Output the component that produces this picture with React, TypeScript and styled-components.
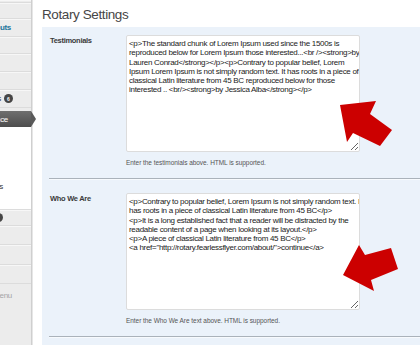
import React from 'react';
import styled, { createGlobalStyle } from 'styled-components';

const GlobalStyle = createGlobalStyle`
  html, body {
    margin: 0;
    padding: 0;
    background: #fff;
    overflow: hidden;
  }
  body {
    font-family: "Liberation Sans", Arial, sans-serif;
  }
`;

const Page = styled.div`
  display: flex;
  width: 420px;
  height: 345px;
  overflow: hidden;
`;

const Rail = styled.div`
  position: relative;
  display: flex;
  flex-direction: column;
  width: 36px;
  min-width: 36px;
`;

const Sidebar = styled.nav`
  display: flex;
  flex-direction: column;
  width: 31px;
  min-width: 31px;
  flex: 1;
  overflow: hidden;
  background: #ececec;
  border-right: 1px solid #cfcfcf;
  box-shadow: 1px 0 0 #e6e6e6;
`;

const MenuItem = styled.div<{ $h: number; $tone?: 'link' | 'muted'; $last?: boolean }>`
  display: flex;
  justify-content: flex-end;
  align-items: center;
  flex: 0 0 ${(p) => p.$h}px;
  overflow: hidden;
  white-space: nowrap;
  border-bottom: ${(p) => (p.$last ? '0' : '1px solid #dcdcdc')};
  box-shadow: ${(p) => (p.$last ? 'none' : 'inset 0 1px 0 #f7f7f7')};
  font-size: 8px;
  letter-spacing: -0.3px;
  color: ${(p) => (p.$tone === 'link' ? '#21759b' : p.$tone === 'muted' ? '#a5a5a5' : '#333')};
  font-weight: ${(p) => (p.$tone === 'link' ? 'bold' : 'normal')};
`;

const MenuText = styled.span<{ $end?: number }>`
  flex: 0 0 auto;
  margin-right: ${(p) => p.$end ?? 0}px;
`;

const ActiveItem = styled(MenuItem)`
  margin-top: 3px;
  border-bottom: 0;
  box-shadow: none;
  background: linear-gradient(#6f6f6f, #4d4d4d);
  color: #fff;
`;

const ActiveTip = styled.span`
  position: absolute;
  left: 31px;
  top: 111px;
  width: 0;
  height: 0;
  border-style: solid;
  border-width: 8px 0 8px 5px;
  border-color: transparent transparent transparent #5a5a5a;
`;

const Submenu = styled.div`
  display: flex;
  flex-direction: column;
  flex: 0 0 78px;
  padding-top: 7px;
  box-sizing: border-box;
  background: #fff;
  border-bottom: 1px solid #dcdcdc;
`;

const SubItem = styled.div`
  display: flex;
  justify-content: flex-end;
  align-items: center;
  flex: 0 0 15px;
  overflow: hidden;
  white-space: nowrap;
  font-size: 8px;
  letter-spacing: -0.3px;
  color: #333;
`;

const Badge = styled.span<{ $end?: number }>`
  flex: 0 0 auto;
  display: inline-flex;
  align-items: center;
  justify-content: center;
  width: 9px;
  height: 9px;
  margin-left: 3px;
  margin-right: ${(p) => p.$end ?? 0}px;
  border-radius: 50%;
  background: #464646;
  color: #fff;
  font-size: 5px;
  font-weight: bold;
  letter-spacing: 0;
`;

const Main = styled.main`
  position: relative;
  flex: 1;
  padding-left: 6px;
`;

const Title = styled.h2`
  margin: 5px 0 3px;
  height: 19px;
  line-height: 19px;
  font-size: 13.5px;
  letter-spacing: -0.4px;
  font-weight: normal;
  color: #464646;
`;

const Panel = styled.div`
  background: #ebf2fa;
  padding-top: 8px;
  min-height: 330px;
`;

const Section = styled.div<{ $first?: boolean }>`
  display: grid;
  grid-template-columns: 76px 234px;
  padding: ${(p) => (p.$first ? '0' : '14px')} 0 0 8px;
`;

const Label = styled.label`
  font-size: 7.5px;
  letter-spacing: -0.3px;
  font-weight: bold;
  color: #3a3a3a;
  line-height: 11px;
`;

const Field = styled.div`
  display: flex;
  flex-direction: column;
`;

const Area = styled.textarea`
  box-sizing: border-box;
  width: 234px;
  height: 117px;
  margin: 0;
  padding: 3px 2px;
  border: 1px solid #dcdcdc;
  border-radius: 2px;
  background: #fff;
  font-family: "Liberation Sans", Arial, sans-serif;
  font-size: 8px;
  letter-spacing: -0.3px;
  line-height: 9.3px;
  color: #222;
  overflow: hidden;
  resize: vertical;
  outline: none;
`;

const Hint = styled.p`
  margin: 6px 0 0;
  font-size: 6.5px;
  letter-spacing: -0.05px;
  line-height: 9px;
  color: #555;
`;

const Divider = styled.hr`
  margin: 11px 0 0 7px;
  border: 0;
  border-top: 1px solid #aab2ba;
  box-shadow: 0 1px 0 #f7fafd;
`;

const Arrow = styled.svg`
  position: absolute;
  pointer-events: none;
`;

const testimonials = [
  '<p>The standard chunk of Lorem Ipsum used since the 1500s is',
  'reproduced below for Lorem Ipsum those interested...<br /><strong>by',
  'Lauren Conrad</strong></p><p>Contrary to popular belief, Lorem',
  'Ipsum Lorem Ipsum is not simply random text. It has roots in a piece of',
  'classical Latin literature from 45 BC reproduced below for those',
  'interested .. <br/><strong>by Jessica Alba</strong></p>',
].join('\n');

const whoWeAre = [
  '<p>Contrary to popular belief, Lorem Ipsum is not simply random text. It',
  'has roots in a piece of classical Latin literature from 45 BC</p>',
  '<p>It is a long established fact that a reader will be distracted by the',
  'readable content of a page when looking at its layout.</p>',
  '<p>A piece of classical Latin literature from 45 BC</p>',
  '<a href="http://rotary.fearlessflyer.com/about/">continue</a>',
].join('\n');

function RedArrow({ points, x, y }: { points: string; x: number; y: number }) {
  return (
    <Arrow width="70" height="60" viewBox="0 0 70 60" style={{ left: x, top: y }}>
      <polygon points={points} fill="#cc0000" />
    </Arrow>
  );
}

export default function App() {
  return (
    <>
      <GlobalStyle />
      <Page>
        <Rail>
          <Sidebar>
            <MenuItem $h={2} />
            <MenuItem $h={15}>
              <MenuText $end={45}>Pages</MenuText>
            </MenuItem>
            <MenuItem $h={17} $tone="link">
              <MenuText $end={20}>Layouts</MenuText>
            </MenuItem>
            <MenuItem $h={16}>
              <MenuText $end={45}>Media</MenuText>
            </MenuItem>
            <MenuItem $h={17}>
              <MenuText $end={45}>Links</MenuText>
            </MenuItem>
            <MenuItem $h={17}>
              <MenuText $end={45}>Posts</MenuText>
            </MenuItem>
            <MenuItem $h={17}>
              <MenuText>Comments</MenuText>
              <Badge $end={18}>6</Badge>
            </MenuItem>
            <ActiveItem $h={16}>
              <MenuText $end={23}>Appearance</MenuText>
            </ActiveItem>
            <Submenu>
              <SubItem>
                <MenuText $end={45}>Themes</MenuText>
              </SubItem>
              <SubItem>
                <MenuText $end={45}>Widgets</MenuText>
              </SubItem>
              <SubItem>
                <MenuText $end={45}>Menus</MenuText>
              </SubItem>
              <SubItem>
                <MenuText $end={28}>Rotary Settings</MenuText>
              </SubItem>
              <SubItem>
                <MenuText $end={45}>Editor</MenuText>
              </SubItem>
            </Submenu>
            <MenuItem $h={15}>
              <MenuText>Plugins</MenuText>
              <Badge $end={28}>1</Badge>
            </MenuItem>
            <MenuItem $h={18}>
              <MenuText $end={45}>Users</MenuText>
            </MenuItem>
            <MenuItem $h={19}>
              <MenuText $end={45}>Tools</MenuText>
            </MenuItem>
            <MenuItem $h={18}>
              <MenuText $end={45}>Settings</MenuText>
            </MenuItem>
            <MenuItem $h={22} $tone="muted" $last>
              <MenuText $end={19}>Collapse menu</MenuText>
            </MenuItem>
          </Sidebar>
          <ActiveTip />
        </Rail>
        <Main>
          <Title>Rotary Settings</Title>
          <Panel>
            <Section $first>
              <Label htmlFor="testimonials">Testimonials</Label>
              <Field>
                <Area id="testimonials" wrap="off" defaultValue={testimonials} />
                <Hint>Enter the testimonials above. HTML is supported.</Hint>
              </Field>
            </Section>
            <Divider />
            <Section>
              <Label htmlFor="who">Who We Are</Label>
              <Field>
                <Area id="who" wrap="off" defaultValue={whoWeAre} />
                <Hint>Enter the Who We Are text above. HTML is supported.</Hint>
              </Field>
            </Section>
            <Divider />
          </Panel>
          <RedArrow x={295} y={95} points="9,10 45,6 39,19 61,35 49,51 22,38 16,47" />
          <RedArrow x={295} y={240} points="12,35 28,5 34,15 60,8 67,29 40,40 43,51" />
        </Main>
      </Page>
    </>
  );
}
